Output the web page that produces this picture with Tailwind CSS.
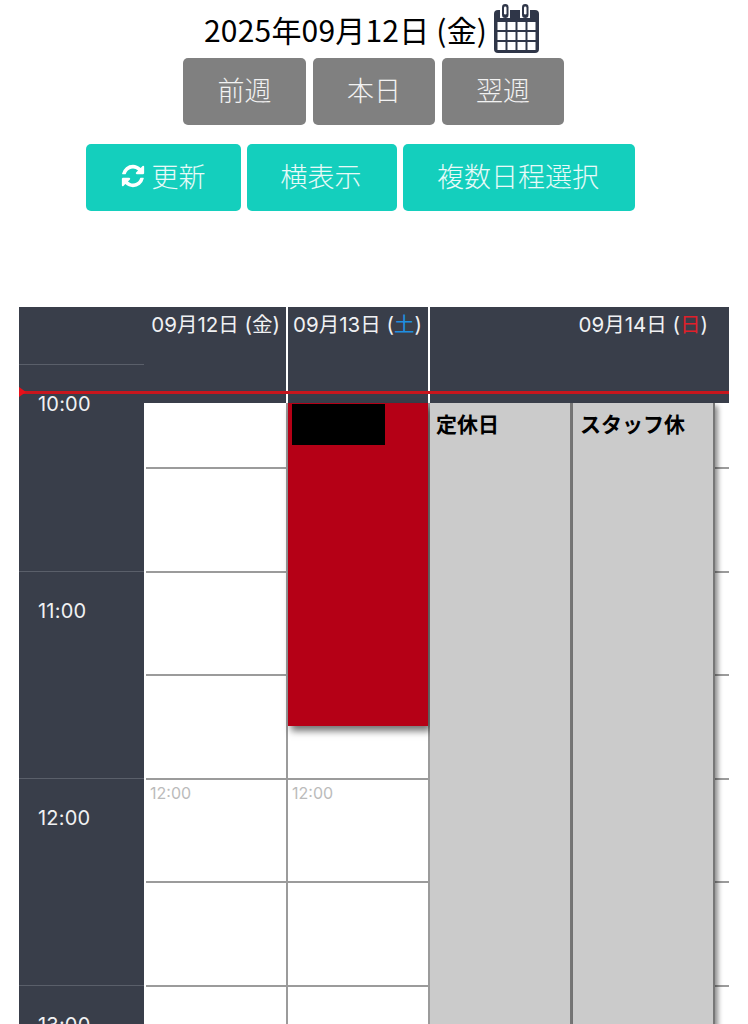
<!DOCTYPE html>
<html lang="ja">
<head>
    <meta charset="UTF-8">
    <meta name="viewport" content="width=device-width, initial-scale=1.0">
    <title>Schedule</title>
    <script src="https://cdn.jsdelivr.net/npm/@tailwindcss/browser@4"></script>
</head>
<body class="bg-white overflow-hidden h-[1024px] font-['Noto_Sans_CJK_JP',sans-serif]">
    <!-- Date + calendar icon -->
    <div class="flex items-start pl-[204px] h-[58px]">
        <span class="text-[30px] leading-[40px] mt-[9px] text-black tracking-[0.2px] w-[290px] whitespace-nowrap">2025年09月12日 (金)</span>
        <svg class="mt-[3px]" width="46" height="51" viewBox="0 0 46 51">
            <rect x="0" y="7" width="45" height="43" rx="4" fill="#2f3648"/>
            <rect x="6" y="2" width="10" height="13" fill="#fff"/>
            <rect x="26" y="2" width="10" height="13" fill="#fff"/>
            <rect x="8" y="1" width="6.5" height="14" rx="3.25" fill="#2f3648"/>
            <rect x="10" y="3.5" width="2.5" height="8" rx="1.25" fill="#fff"/>
            <rect x="28" y="1" width="6.5" height="14" rx="3.25" fill="#2f3648"/>
            <rect x="30" y="3.5" width="2.5" height="8" rx="1.25" fill="#fff"/>
            <g fill="#fff">
                <rect x="3.5" y="19" width="8" height="8"/><rect x="13.5" y="19" width="8" height="8"/><rect x="23.5" y="19" width="8" height="8"/><rect x="33.5" y="19" width="8" height="8"/>
                <rect x="3.5" y="29" width="8" height="8"/><rect x="13.5" y="29" width="8" height="8"/><rect x="23.5" y="29" width="8" height="8"/><rect x="33.5" y="29" width="8" height="8"/>
                <rect x="3.5" y="39" width="8" height="8"/><rect x="13.5" y="39" width="8" height="8"/><rect x="23.5" y="39" width="8" height="8"/><rect x="33.5" y="39" width="8" height="8"/>
            </g>
        </svg>
    </div>

    <!-- Week buttons -->
    <div class="flex gap-[7px] pl-[183px]">
        <button class="w-[123px] h-[67px] pb-[3px] rounded-[5px] bg-[#808080] text-white/90 text-[27px] font-light">前週</button>
        <button class="w-[122px] h-[67px] pb-[3px] rounded-[5px] bg-[#808080] text-white/90 text-[27px] font-light">本日</button>
        <button class="w-[122px] h-[67px] pb-[3px] rounded-[5px] bg-[#808080] text-white/90 text-[27px] font-light">翌週</button>
    </div>

    <!-- Action buttons -->
    <div class="flex gap-[6px] pl-[86px] mt-[19px]">
        <button class="w-[155px] h-[67px] pb-[3px] pr-[2px] rounded-[5px] bg-[#14cfbd] text-white/90 text-[27px] font-light flex items-center justify-center gap-[6px]">
            <svg width="26" height="26" viewBox="0 0 1792 1792" fill="#fff"><path d="M1639 1056q0 5-1 7-64 268-268 434.5t-478 166.5q-146 0-282.5-55t-243.5-157l-129 129q-19 19-45 19t-45-19-19-45v-448q0-26 19-45t45-19h448q26 0 45 19t19 45-19 45l-137 137q71 66 161 102t187 36q134 0 250-65t186-179q11-17 53-117 8-23 30-23h192q13 0 22.5 9.5t9.5 22.5zm25-800v448q0 26-19 45t-45 19h-448q-26 0-45-19t-19-45 19-45l138-138q-148-137-349-137-134 0-250 65t-186 179q-11 17-53 117-8 23-30 23h-199q-13 0-22.5-9.5t-9.5-22.5v-7q65-268 270-434.5t480-166.5q146 0 284 55.5t245 156.5l130-129q19-19 45-19t45 19 19 45z"/></svg>
            更新
        </button>
        <button class="w-[150px] h-[67px] pb-[3px] pr-[2px] rounded-[5px] bg-[#14cfbd] text-white/90 text-[27px] font-light">横表示</button>
        <button class="w-[232px] h-[67px] pb-[3px] pr-[2px] rounded-[5px] bg-[#14cfbd] text-white/90 text-[27px] font-light">複数日程選択</button>
    </div>

    <!-- Calendar -->
    <div class="relative flex w-[710px] h-[717px] ml-[19px] mt-[96px] overflow-hidden font-['Inter','Noto_Sans_CJK_JP',sans-serif]">
        <!-- Time column -->
        <div class="w-[125px] shrink-0 bg-[#393e4a] text-[#f0f1f3] text-[20px] tracking-[0.2px]">
            <div class="h-[58px] border-b border-[#5a5f6a]"></div>
            <div class="h-[207px] border-b border-[#5a5f6a] pt-[26px] pl-[19px] leading-[26px]">10:00</div>
            <div class="h-[207px] border-b border-[#5a5f6a] pt-[26px] pl-[19px] leading-[26px]">11:00</div>
            <div class="h-[207px] border-b border-[#5a5f6a] pt-[26px] pl-[19px] leading-[26px]">12:00</div>
            <div class="pt-[26px] pl-[19px] leading-[26px]">13:00</div>
        </div>

        <!-- 09/12 -->
        <div class="w-[144px] shrink-0">
            <div class="h-[96px] bg-[#393e4a] border-r-2 border-white text-right pr-[6px] pt-[5px] text-[20.5px] leading-[26px] text-[#f0f1f3] whitespace-nowrap">09月12日 (金)</div>
            <div class="border-r-2 border-[#9b9b9b] pl-[2px] text-[16px] text-[#bbbbbb]">
                <div class="h-[66px] border-b-2 border-[#9b9b9b]"></div>
                <div class="h-[103.5px] border-b-2 border-[#9b9b9b]"></div>
                <div class="h-[103.5px] border-b-2 border-[#9b9b9b]"></div>
                <div class="h-[103.5px] border-b-2 border-[#9b9b9b]"></div>
                <div class="h-[103.5px] border-b-2 border-[#9b9b9b] pt-px pl-[4px]">12:00</div>
                <div class="h-[103.5px] border-b-2 border-[#9b9b9b]"></div>
                <div class="h-[103.5px] border-b-2 border-[#9b9b9b]"></div>
            </div>
        </div>

        <!-- 09/13 -->
        <div class="relative w-[142px] shrink-0">
            <div class="h-[96px] bg-[#393e4a] border-r-2 border-white pl-[5px] pt-[5px] text-[20.5px] leading-[26px] text-[#f0f1f3] whitespace-nowrap">09月13日 (<span class="text-[#1f8fe0]">土</span>)</div>
            <div class="border-r-2 border-[#9b9b9b] text-[16px] text-[#bbbbbb]">
                <div class="h-[66px] border-b-2 border-[#9b9b9b]"></div>
                <div class="h-[103.5px] border-b-2 border-[#9b9b9b]"></div>
                <div class="h-[103.5px] border-b-2 border-[#9b9b9b]"></div>
                <div class="h-[103.5px] border-b-2 border-[#9b9b9b]"></div>
                <div class="h-[103.5px] border-b-2 border-[#9b9b9b] pt-px pl-[4px]">12:00</div>
                <div class="h-[103.5px] border-b-2 border-[#9b9b9b]"></div>
                <div class="h-[103.5px] border-b-2 border-[#9b9b9b]"></div>
            </div>
            <!-- Booking -->
            <div class="absolute left-0 top-[96px] w-[140px] h-[323px] bg-[#b50016] shadow-[3px_5px_7px_rgba(0,0,0,0.55)]">
                <div class="ml-[4px] mt-px w-[93px] h-[41px] bg-black"></div>
            </div>
        </div>

        <!-- 09/14 -->
        <div class="relative flex-1">
            <div class="h-[96px] bg-[#393e4a] text-right pr-[21px] pt-[5px] text-[20.5px] leading-[26px] text-[#f0f1f3] whitespace-nowrap">09月14日 (<span class="text-[#e0202a]">日</span>)</div>
            <div>
                <div class="h-[66px] border-b-2 border-[#9b9b9b]"></div>
                <div class="h-[103.5px] border-b-2 border-[#9b9b9b]"></div>
                <div class="h-[103.5px] border-b-2 border-[#9b9b9b]"></div>
                <div class="h-[103.5px] border-b-2 border-[#9b9b9b]"></div>
                <div class="h-[103.5px] border-b-2 border-[#9b9b9b]"></div>
                <div class="h-[103.5px] border-b-2 border-[#9b9b9b]"></div>
                <div class="h-[103.5px] border-b-2 border-[#9b9b9b]"></div>
            </div>
            <!-- Closed blocks -->
            <div class="absolute left-0 top-[96px] w-[143px] h-[640px] bg-[#cbcbcb] border-r-[3px] border-[#777777] pl-[6px] pt-[4px] text-[21px] leading-[32px] font-bold text-black font-['Noto_Sans_CJK_JP',sans-serif]">定休日</div>
            <div class="absolute left-[143px] top-[96px] w-[142px] h-[640px] bg-[#cbcbcb] border-r-2 border-[#777777] shadow-[3px_3px_5px_rgba(0,0,0,0.45)] pl-[7px] pt-[4px] text-[21px] leading-[32px] font-bold text-black font-['Noto_Sans_CJK_JP',sans-serif]">スタッフ休</div>
        </div>

        <!-- Current time line -->
        <div class="absolute left-0 right-0 top-[84px] h-[3px] bg-[#c8161d]"></div>
        <div class="absolute left-0 top-[80px] w-0 h-0 border-y-[5px] border-y-transparent border-l-[7px] border-l-[#e8101a]"></div>
    </div>
</body>
</html>
